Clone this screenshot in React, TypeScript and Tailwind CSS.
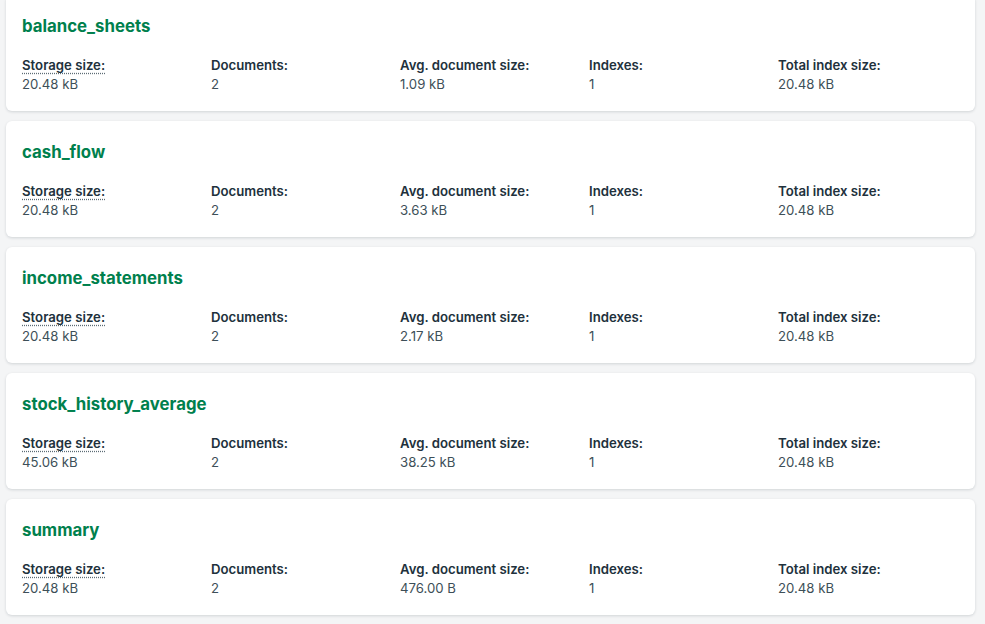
import React from 'react';

type Collection = {
  name: string;
  storage: string;
  docs: string;
  avg: string;
  indexes: string;
  indexSize: string;
};

const collections: Collection[] = [
  { name: 'balance_sheets', storage: '20.48 kB', docs: '2', avg: '1.09 kB', indexes: '1', indexSize: '20.48 kB' },
  { name: 'cash_flow', storage: '20.48 kB', docs: '2', avg: '3.63 kB', indexes: '1', indexSize: '20.48 kB' },
  { name: 'income_statements', storage: '20.48 kB', docs: '2', avg: '2.17 kB', indexes: '1', indexSize: '20.48 kB' },
  { name: 'stock_history_average', storage: '45.06 kB', docs: '2', avg: '38.25 kB', indexes: '1', indexSize: '20.48 kB' },
  { name: 'summary', storage: '20.48 kB', docs: '2', avg: '476.00 B', indexes: '1', indexSize: '20.48 kB' },
];

const Stat = ({ label, value, dotted }: { label: string; value: string; dotted?: boolean }) => (
  <div className="flex flex-col">
    <span
      className={
        'text-[13.2px] leading-[19px] font-semibold text-[#21313c] self-start ' +
        (dotted ? 'underline decoration-dotted decoration-[#5c6c75] underline-offset-[3px]' : '')
      }
    >
      {label}
    </span>
    <span className="text-[13.2px] leading-[19px] text-[#3d4f58]">{value}</span>
  </div>
);

const CollectionCard = ({ c }: { c: Collection }) => (
  <div className="bg-white rounded-md shadow-[0_1px_3px_rgba(0,30,43,0.15)] h-[116px] pl-4 pt-[21px]">
    <h2 className="text-[16.8px] leading-[20px] font-bold text-[#00804d]">{c.name}</h2>
    <div className="grid grid-cols-[repeat(5,189px)] mt-[20px]">
      <Stat label="Storage size:" value={c.storage} dotted />
      <Stat label="Documents:" value={c.docs} />
      <Stat label="Avg. document size:" value={c.avg} />
      <Stat label="Indexes:" value={c.indexes} />
      <Stat label="Total index size:" value={c.indexSize} />
    </div>
  </div>
);

export default function App() {
  return (
    <div className="h-[624px] overflow-hidden bg-[#f4f5f6] font-['Inter',sans-serif]">
      <div className="flex flex-col gap-[10px] pl-[6px] pr-[10px] -mt-[5px]">
        {collections.map((c) => (
          <CollectionCard key={c.name} c={c} />
        ))}
      </div>
    </div>
  );
}
